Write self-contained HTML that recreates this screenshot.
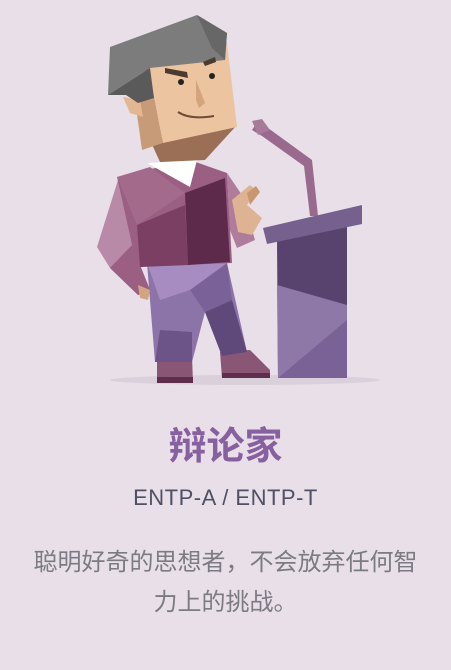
<!DOCTYPE html>
<html><head><meta charset="utf-8"><style>
html,body{margin:0;padding:0;}
body{width:451px;height:670px;background:#e8dfe9;position:relative;overflow:hidden;font-family:"Liberation Sans","Noto Sans CJK SC",sans-serif;}
svg{position:absolute;left:0;top:0;}
.t{position:absolute;left:0;width:451px;text-align:center;}
</style></head><body>
<svg width="451" height="400" viewBox="0 0 451 400">
<ellipse cx="245" cy="380" rx="135" ry="5" fill="#d9d0dc"/>
<polygon points="256,124 268,128 312,160 318,216 310,216 304,166 262,136 252,130" fill="#9a6a8e"/>
<polygon points="252,121 262,119 270,130 258,135" fill="#a77a9a"/>
<polygon points="277,240 347,226 347,378 278,378" fill="#58436e"/>
<polygon points="277,285 347,305 347,378 278,378" fill="#8e78a8"/>
<polygon points="278,378 347,320 347,378" fill="#7b6296"/>
<polygon points="263,228 362,205 362,224 267,244" fill="#76608e"/>
<polygon points="157,358 192,356 193,383 157,383" fill="#8a5675"/>
<rect x="157" y="377" width="36" height="6" fill="#5e2f4c"/>
<polygon points="220,352 250,350 270,370 270,378 222,378" fill="#8a5675"/>
<rect x="222" y="373" width="48" height="5" fill="#5e2f4c"/>
<polygon points="147,263 227,263 247,352 222,356 205,312 192,362 155,362" fill="#8d74a8"/>
<polygon points="160,330 192,332 192,362 155,362" fill="#6d5488"/>
<polygon points="205,312 232,300 247,352 222,356" fill="#5f487a"/>
<polygon points="190,290 227,263 232,300 205,312" fill="#7a6298"/>
<polygon points="147,263 227,263 190,290 160,300" fill="#a68cc0"/>
<polygon points="118,180 138,185 132,245 150,290 138,295 110,268 97,247" fill="#b98aa8"/>
<polygon points="110,268 132,245 150,290 138,295" fill="#9a5f82"/>
<polygon points="138,285 150,290 148,300 140,298" fill="#d2a582"/>
<polygon points="117,177 190,160 227,173 232,263 137,267" fill="#9a5f82"/>
<polygon points="137,225 185,205 188,265 140,267" fill="#7a3f63"/>
<polygon points="185,193 225,178 230,262 188,265" fill="#5e2a4c"/>
<polygon points="117,177 150,167 185,193 137,225" fill="#a36a8c"/>
<polygon points="147,163 197,160 190,187" fill="#ffffff"/>
<polygon points="227,173 242,195 255,240 237,248 230,230" fill="#b07c9c"/>
<polygon points="232,200 250,185 256,190 247,205 262,218 252,235 238,232" fill="#ddb394"/>
<polygon points="247,193 256,186 260,192 250,205" fill="#c9976f"/>
<polygon points="150,140 237,125 205,160 160,162" fill="#9a6f55"/>
<polygon points="135,100 147,60 163,143 142,150" fill="#c79a78"/>
<polygon points="147,58 227,43 237,127 163,143" fill="#ecc4a0"/>
<polygon points="123,97 140,100 143,117 130,113" fill="#e3b792"/>
<polygon points="110,47 197,15 227,33 225,60 150,68 108,95" fill="#7c7c7c"/>
<polygon points="108,95 150,68 154,98 138,103 126,95" fill="#5a5a5a"/>
<polygon points="197,15 227,33 225,60 212,48" fill="#676767"/>
<polygon points="165,68 187,72 188,78 165,73" fill="#4a3a30"/>
<polygon points="203,62 215,57 216,62 205,66" fill="#4a3a30"/>
<circle cx="181" cy="82" r="3" fill="#222"/>
<circle cx="212" cy="76" r="3" fill="#222"/>
<polygon points="196,80 205,103 199,108 196,100" fill="#d4a47f"/>
<path d="M178,112 Q190,120 214,116" stroke="#6e4a38" stroke-width="2" fill="none"/>
</svg>
<div class="t" style="top:421px;font-size:38px;font-weight:bold;color:#87609f;line-height:52px;">辩论家</div>
<div class="t" style="top:484px;font-size:22px;color:#4f5063;line-height:28px;letter-spacing:0.5px;">ENTP-A / ENTP-T</div>
<div class="t" style="top:543px;font-size:24px;color:#7c7a82;line-height:40px;padding:0 10px;box-sizing:border-box;">聪明好奇的思想者，不会放弃任何智<br>力上的挑战。</div>
</body></html>
